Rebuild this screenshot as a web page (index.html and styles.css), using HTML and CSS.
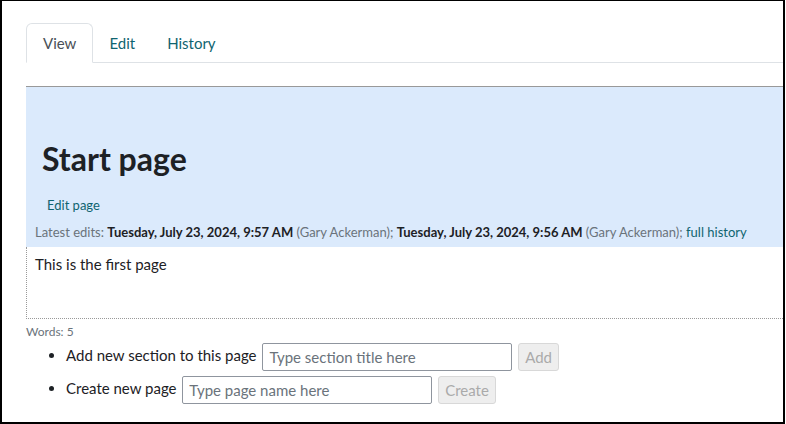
FILE: index.html
```html
<!doctype html>
<html lang="en">
  <head>
    <meta charset="UTF-8" />
    <meta name="viewport" content="width=device-width, initial-scale=1.0" />
    <title>Start page</title>
    <link rel="stylesheet" href="styles.css">
  </head>
  <body>
    <div class="frame">
      <ul class="tabs">
        <li><a class="tab active" href="#">View</a></li>
        <li><a class="tab" href="#">Edit</a></li>
        <li><a class="tab" href="#">History</a></li>
      </ul>

      <div class="page-header">
        <h1>Start page</h1>
        <div class="edit-link"><a href="#">Edit page</a></div>
        <div class="latest">
          Latest edits: <strong>Tuesday, July 23, 2024, 9:57 AM</strong> (Gary Ackerman);
          <strong>Tuesday, July 23, 2024, 9:56 AM</strong> (Gary Ackerman);
          <a href="#">full history</a>
        </div>
      </div>

      <div class="page-content">
        <p>This is the first page</p>
      </div>

      <div class="words">Words: 5</div>

      <ul class="actions">
        <li>
          Add new section to this page
          <input type="text" class="field" placeholder="Type section title here">
          <button class="btn" disabled>Add</button>
        </li>
        <li>
          Create new page
          <input type="text" class="field" placeholder="Type page name here">
          <button class="btn" disabled>Create</button>
        </li>
      </ul>
    </div>
  </body>
</html>
```

FILE: styles.css
```css
body {
  font-family: Lato, "Liberation Sans", sans-serif;
  margin: 0;
  padding: 0;
  background-color: white;
  color: #1d2125;
  font-size: 15px;
}
a {
  color: #0f6470;
  text-decoration: none;
}
.frame {
  width: 785px;
  height: 424px;
  box-sizing: border-box;
  border: 2px solid black;
  border-top-width: 1px;
  padding-left: 24px;
  overflow: hidden;
}
.tabs {
  display: flex;
  list-style: none;
  margin: 22px 0 0;
  padding: 0;
  border-bottom: 1px solid #dee2e6;
}
.tab {
  display: block;
  padding: 8px 15px;
  line-height: 22px;
  border: 1px solid transparent;
  border-radius: 6px 6px 0 0;
  margin-bottom: -1px;
}
.tab.active {
  color: #495057;
  background-color: white;
  border-color: #dee2e6 #dee2e6 white;
  padding: 8px 16px;
}
.page-header {
  margin-top: 23px;
  border-top: 1px solid #999;
  background-color: #dbeafc;
  padding: 53px 0 6px 9px;
  height: 161px;
  box-sizing: border-box;
}
h1 {
  margin: 0 0 0 7px;
  font-size: 32px;
  font-weight: bold;
  line-height: 38px;
}
.edit-link {
  margin: 17px 0 0 12px;
  font-size: 13px;
  line-height: 20px;
}
.latest {
  margin-top: 7px;
  font-size: 13px;
  line-height: 20px;
  color: #6a737b;
}
.latest strong {
  color: #1d2125;
}
.page-content {
  height: 72px;
  box-sizing: border-box;
  border-left: 1px dotted #999;
  border-bottom: 1px dotted #999;
  padding: 6px 8px;
}
.page-content p {
  margin: 0;
  line-height: 22px;
}
.words {
  font-size: 12px;
  line-height: 18px;
  color: #6a737b;
  margin-top: 4px;
}
.actions {
  margin: 0;
  padding-left: 40px;
}
.actions li {
  margin-bottom: 3px;
  line-height: 28px;
}
.field {
  width: 250px;
  height: 28px;
  box-sizing: border-box;
  border: 1px solid #8f959e;
  border-radius: 2px;
  margin-left: 2px;
  padding: 0 6px;
  font-family: inherit;
  font-size: 15px;
  vertical-align: middle;
}
.field::placeholder {
  color: #6a737b;
}
.btn {
  height: 28px;
  margin-left: 2px;
  padding: 0 6px;
  border: 1px solid #d8d8d8;
  border-radius: 3px;
  background-color: #eee;
  color: #aaa;
  font-family: inherit;
  font-size: 15px;
  vertical-align: middle;
}
```
